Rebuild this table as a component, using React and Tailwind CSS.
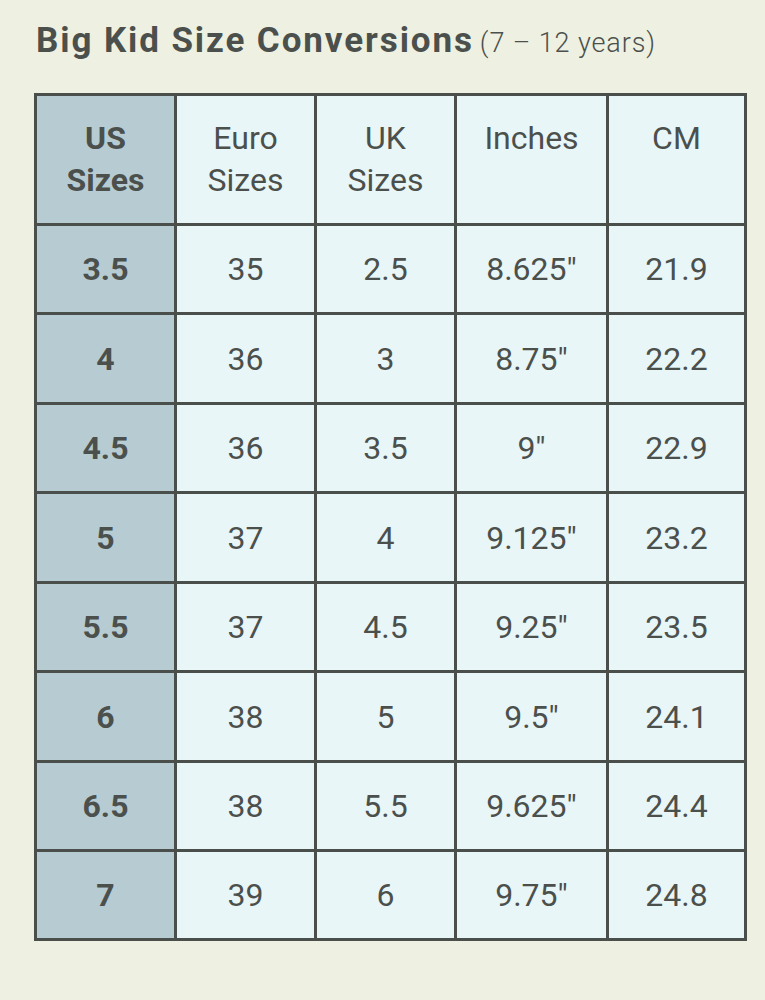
import React from "react";

const rows = [
  ["3.5", "35", "2.5", "8.625\"", "21.9"],
  ["4", "36", "3", "8.75\"", "22.2"],
  ["4.5", "36", "3.5", "9\"", "22.9"],
  ["5", "37", "4", "9.125\"", "23.2"],
  ["5.5", "37", "4.5", "9.25\"", "23.5"],
  ["6", "38", "5", "9.5\"", "24.1"],
  ["6.5", "38", "5.5", "9.625\"", "24.4"],
  ["7", "39", "6", "9.75\"", "24.8"],
];

export default function App() {
  return (
    <div
      className="w-[765px] h-[1000px] bg-[#eef0e2] text-[#4b504d] overflow-hidden"
      style={{ fontFamily: "Roboto, 'Liberation Sans', sans-serif" }}
    >
      <div className="pl-[36px] pt-[21px] h-[93px] flex items-start">
        <h1 className="text-[35px] leading-[40px] font-bold tracking-[1.9px] whitespace-nowrap">
          Big Kid Size Conversions
          <span className="font-light text-[27px] tracking-[0.9px] ml-[6px]">(7 – 12 years)</span>
        </h1>
      </div>
      <div className="ml-[34px] w-[713px] h-[848px] bg-[#4a4f4b] p-[3px] grid grid-cols-[137px_137px_137px_149px_135px] grid-rows-[127px_86px_87px_86px_87px_86px_87px_86px_86px] gap-[3px]">
        <div className="bg-[#b7ccd2] flex flex-col items-center pt-[21px] text-[32px] leading-[42px] font-bold">
          <span>US</span>
          <span>Sizes</span>
        </div>
        {[["Euro", "Sizes"], ["UK", "Sizes"], ["Inches"], ["CM"]].map((h, i) => (
          <div
            key={i}
            className="bg-[#e9f6f7] flex flex-col items-center pt-[21px] text-[32px] leading-[42px]"
          >
            {h.map((t) => (
              <span key={t}>{t}</span>
            ))}
          </div>
        ))}
        {rows.map((r, ri) =>
          r.map((c, ci) => (
            <div
              key={ri + "-" + ci}
              className={
                ci === 0
                  ? "bg-[#b7ccd2] flex items-center justify-center text-[32px] font-bold"
                  : "bg-[#e9f6f7] flex items-center justify-center text-[32px]"
              }
            >
              {c}
            </div>
          ))
        )}
      </div>
    </div>
  );
}
